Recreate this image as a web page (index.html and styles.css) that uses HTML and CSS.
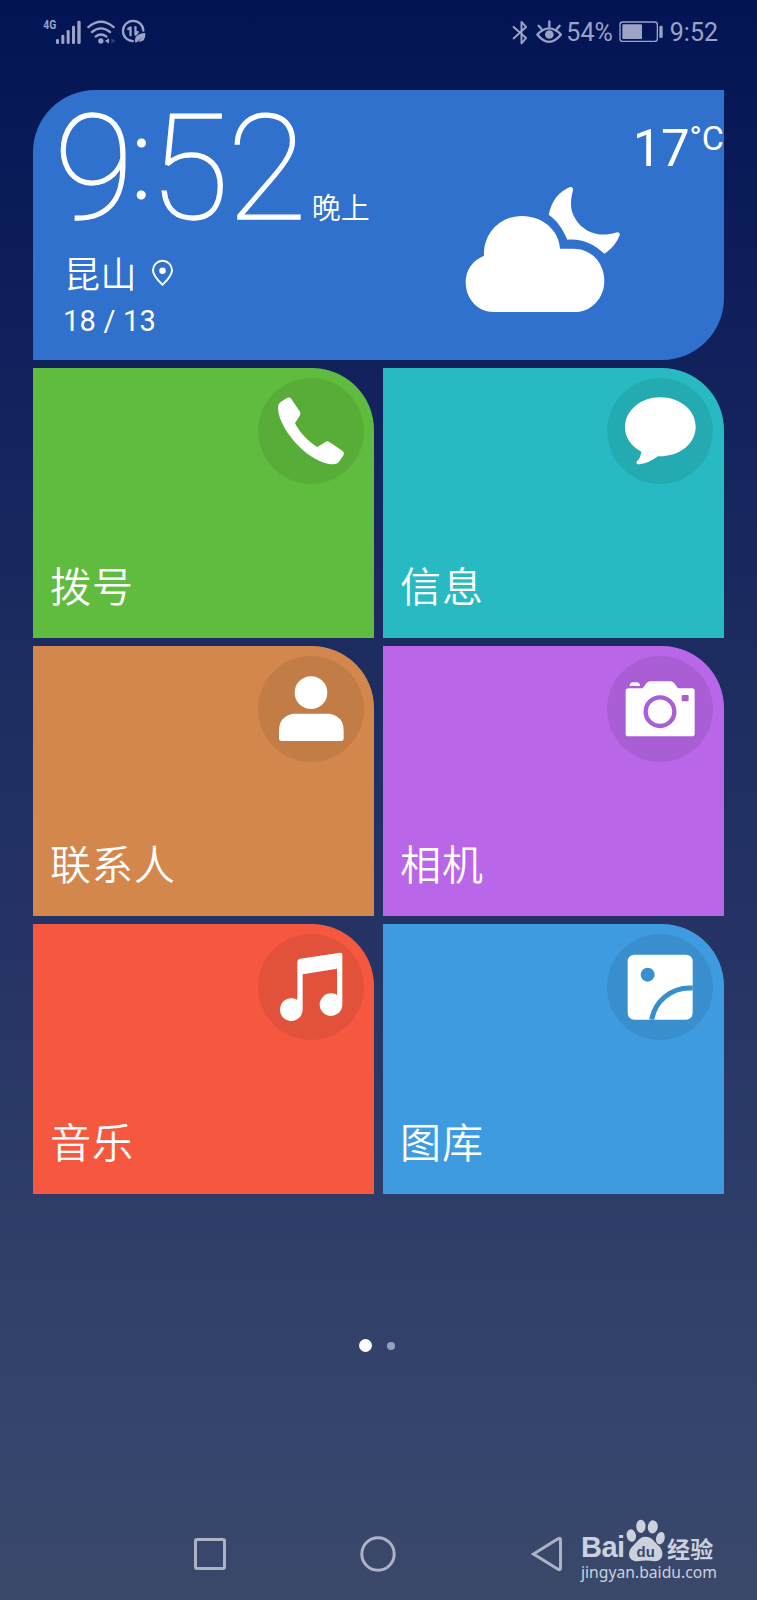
FILE: index.html
```html
<!DOCTYPE html>
<html lang="zh-CN">
<head>
	<meta charset="UTF-8">
	<meta name="viewport" content="width=device-width, initial-scale=1">
	<title>桌面</title>
	<link rel="stylesheet" href="styles.css">
</head>

<body>

<!-- 状态栏 -->
<div class="status">
	<svg class="signal" viewBox="0 -12 120 99" width="40" height="33">
		<text x="1" y="31" class="net" textLength="39" lengthAdjust="spacingAndGlyphs">4G</text>
		<rect x="39" y="60" width="9" height="15" rx="4"/>
		<rect x="55" y="47" width="9" height="28" rx="4"/>
		<rect x="71" y="33" width="9" height="42" rx="4"/>
		<rect x="87" y="20" width="9" height="55" rx="4"/>
		<rect x="103" y="5" width="10" height="70" rx="4"/>
	</svg>
	<svg class="wifi" viewBox="172 30 88 75" width="29" height="25">
		<path class="line" d="M176 54Q214 22 253 54M187 69Q214 47 242 69M198 83Q214 70 231 83"/>
		<circle cx="214" cy="96" r="8"/>
		<path d="M239 88v16l-13-8z"/>
		<path d="M246 88v16l13-8z" opacity=".3"/>
	</svg>
	<svg class="data" viewBox="274 35 76 75" width="25" height="25">
		<path class="line" d="M310 102A31 31 0 1 1 342 70"/>
		<path class="line" d="M296 65l7-5v24M318 59v23l7-8"/>
		<path d="M317 106Q312 79 348 77Q350 105 326 104L338 89L322 105z"/>
	</svg>

	<div class="status-right">
		<svg class="bt" viewBox="66 33 50 76" width="17" height="25">
			<path class="line bold" d="M70 54l38 34l-14 16V39l14 15l-38 35"/>
		</svg>
		<svg class="eye" viewBox="137 36 78 74" width="26" height="25">
			<path class="line" d="M141 79Q176 42 212 79Q176 123 141 79zM177 40v14M145 53l8 9M208 53l-8 9"/>
			<circle cx="177" cy="79" r="13"/>
		</svg>
		<span class="percent">54%</span>
		<svg class="battery" viewBox="385 40 135 66" width="45" height="22">
			<rect class="line thin" x="388" y="43" width="112" height="58" rx="8"/>
			<rect x="395" y="50" width="59" height="44" rx="2"/>
			<rect x="506" y="54" width="10" height="37" rx="4"/>
		</svg>
		<span class="time">9:52</span>
	</div>
</div>

<div class="tiles">
	<!-- 时间天气 -->
	<div class="weather">
		<div class="weather-left">
			<div class="clock">
				<span class="clock-num">9<span class="colon">:</span>52</span>
				<span class="clock-part">晚上</span>
			</div>
			<div class="city">
				<span>昆山</span>
				<svg viewBox="394 534 70 84" width="23" height="28">
					<path d="M429 612Q400 585 400 568A29 29 0 0 1 458 568Q458 585 429 612z" fill="none" stroke="#fff" stroke-width="6"/>
					<circle cx="429" cy="569" r="10" fill="#fff"/>
				</svg>
			</div>
			<div class="range">18 / 13</div>
		</div>
		<div class="weather-right">
			<div class="temp">17<span class="unit">°C</span></div>
			<svg class="cloud" viewBox="75 318 468 381" width="156" height="127">
				<path d="M162 696C112 696 77 656 77 606C77 570 99 540 132 527C130 460 180 408 246 408C307 408 357 450 360 506H400C455 506 493 550 493 602C493 655 453 696 405 696z"/>
				<path d="M326 404C336 360 357 335 390 321Q400 320 399 331C390 365 390 391 406 416C425 449 463 468 505 463Q519 461 531 457Q541 457 539 466C530 488 514 509 493 521C464 495 431 476 382 479C370 449 350 420 326 404z"/>
			</svg>
		</div>
	</div>

	<div class="tile green">
		<svg class="icon" viewBox="84 56 318 318">
			<circle class="disc" cx="243" cy="215" r="159"/>
			<path d="M152 128L171 116Q179 112 184 119L210 157Q213 163 209 169L195 192C210 220 234 247 262 263L286 248Q292 244 298 248L337 274Q344 279 341 286L329 305Q322 315 309 315C275 314 235 290 205 259C175 228 146 184 144 148Q143 135 152 128z"/>
		</svg>
		<span class="name">拨号</span>
	</div>

	<div class="tile teal">
		<svg class="icon" viewBox="52 56 318 318">
			<circle class="disc" cx="211" cy="215" r="159"/>
			<path d="M212 114C271 114 318 153 318 202C318 253 270 292 205 291Q177 312 148 315Q138 315 141 307Q152 297 155 277C124 261 106 235 106 204C106 154 153 114 212 114z"/>
		</svg>
		<span class="name">信息</span>
	</div>

	<div class="tile brown">
		<svg class="icon" viewBox="84 50 318 318">
			<circle class="disc" cx="243" cy="209" r="159"/>
			<circle cx="243" cy="160" r="49"/>
			<path d="M190 223H298Q341 231 341 274V297Q341 305 333 305H155Q147 305 147 297V274Q147 231 190 223z"/>
		</svg>
		<span class="name">联系人</span>
	</div>

	<div class="tile purple">
		<svg class="icon" viewBox="52 50 318 318">
			<circle class="disc" cx="211" cy="209" r="159"/>
			<path d="M120 140Q120 129 131 129H140Q151 129 151 140z"/>
			<path d="M116 147H159L171 131Q175 126 182 126H242Q249 126 253 131L265 147H307Q315 147 315 155V283Q315 291 307 291H116Q108 291 108 283V155Q108 147 116 147z"/>
			<circle class="hole-line" cx="211" cy="217" r="43" stroke-width="13"/>
			<rect class="hole" x="276" y="167" width="21" height="19" rx="3"/>
		</svg>
		<span class="name">相机</span>
	</div>

	<div class="tile red">
		<svg class="icon" viewBox="84 58 318 318">
			<circle class="disc" cx="243" cy="217" r="159"/>
			<path d="M210 132L330 114Q337 113 337 120V270A34 34 0 1 1 321 241V162L218 179V286A34 34 0 1 1 202 256V141Q202 134 210 132z"/>
		</svg>
		<span class="name">音乐</span>
	</div>

	<div class="tile blue">
		<svg class="icon" viewBox="52 58 318 318">
			<circle class="disc" cx="211" cy="217" r="159"/>
			<rect x="114" y="120" width="195" height="195" rx="20"/>
			<circle class="hole" cx="174" cy="180" r="21"/>
			<path class="hole-line" d="M186 315C196 260 243 220 300 220H309" stroke-width="15"/>
		</svg>
		<span class="name">图库</span>
	</div>
</div>

<!-- 页码 -->
<div class="pages">
	<span class="dot on"></span>
	<span class="dot"></span>
</div>

<!-- 导航栏 -->
<div class="nav">
	<svg class="recent" viewBox="0 0 32 32" width="32" height="32"><rect x="1.5" y="1.5" width="29" height="29" rx="1.5"/></svg>
	<svg class="home" viewBox="0 0 36 36" width="36" height="36"><circle cx="18" cy="18" r="16.2"/></svg>
	<svg class="back" viewBox="0 0 32 36" width="32" height="36"><path d="M2.5 18L27 2.8Q29.500 1.500 29.500 4V32Q29.500 34.500 27 33.200z"/></svg>

	<div class="mark">
		<div class="mark-top">
			<span class="bai">Bai</span>
			<svg viewBox="381 55 118 130" width="39" height="43">
				<ellipse cx="397" cy="105" rx="14" ry="19" transform="rotate(-12 397 105)"/>
				<ellipse cx="426" cy="77" rx="14" ry="20"/>
				<ellipse cx="462" cy="79" rx="15" ry="20" transform="rotate(8 462 79)"/>
				<ellipse cx="485" cy="113" rx="13" ry="19" transform="rotate(14 485 113)"/>
				<path d="M440 109C458 109 465 122 476 133C501 152 493 183 468 183Q441 178 416 183C386 183 382 153 404 134C416 124 422 109 440 109z"/>
				<text x="413" y="170" class="du" textLength="55" lengthAdjust="spacingAndGlyphs">du</text>
			</svg>
			<span class="jy">经验</span>
		</div>
		<div class="mark-url">jingyan.baidu.com</div>
	</div>
</div>

</body>
</html>
```
FILE: styles.css
```css
html, body {
	height: 100%;
	margin: 0;
	overflow: hidden;
}

body {
	display: flex;
	flex-direction: column;
	background: linear-gradient(#031455 0%, #091a58 10%, #14245e 28%, #1d2d60 42%, #253464 60%, #30406a 80%, #35456d 91%, #3a4869 100%);
	color: #fff;
	font-family: Roboto, "Noto Sans CJK SC", sans-serif;
}

svg {
	display: block;
	flex: none;
}

/* 状态栏 */
.status {
	display: flex;
	align-items: center;
	box-sizing: border-box;
	height: 90px;
	padding: 0 39px 26px 43px;
	color: #9ba3c6;
	fill: #9ba3c6;
}

.signal,
.wifi,
.data {
	margin-top: -2px;
}

.status .line {
	fill: none;
	stroke: #9ba3c6;
	stroke-width: 7;
	stroke-linecap: round;
	stroke-linejoin: round;
}

.status .thin {
	stroke-width: 4;
}

.status .bold {
	stroke-width: 6;
}

.net {
	font: bold 38px Roboto, sans-serif;
}

.wifi {
	margin-left: 4px;
}

.data {
	margin-left: 5px;
}

.status-right {
	display: flex;
	align-items: center;
	margin-left: auto;
	font-size: 25px;
	line-height: 30px;
}

.eye {
	margin-left: 7px;
}

.percent {
	margin: 2px 0 0 4px;
}

.battery {
	margin-left: 6px;
}

.time {
	margin: 2px 0 0 6px;
}

/* 磁贴 */
.tiles {
	display: grid;
	grid-template-columns: 341px 341px;
	grid-auto-rows: 270px;
	gap: 8px 9px;
	padding: 0 33px;
}

.weather {
	grid-column: 1 / 3;
	display: flex;
	justify-content: space-between;
	background: #3071ce;
	border-radius: 62px 0 62px 0;
}

.weather-left {
	padding: 6px 0 0 21px;
}

.clock {
	display: flex;
	align-items: baseline;
	height: 158px;
}

.clock-num {
	font-size: 146px;
	font-weight: 100;
	line-height: 148px;
	letter-spacing: -2.200px;
	-webkit-text-stroke: 1.300px #fff;
}

.colon {
	font-size: 111px;
	line-height: 1px;
	vertical-align: 21px;
	-webkit-text-stroke: 3px #fff;
}

.clock-part {
	margin-left: 7px;
	font-size: 29px;
	font-weight: 350;
	line-height: 40px;
}

.city {
	display: flex;
	align-items: center;
	gap: 14px;
	margin-left: 10px;
	font-size: 36px;
	font-weight: 350;
	line-height: 44px;
	letter-spacing: 0.500px;
}

.city svg {
	margin-bottom: 6px;
}

.range {
	margin: 6px 0 0 9px;
	font-size: 29px;
	line-height: 34px;
	letter-spacing: 0.2px;
}

.weather-right {
	width: 259px;
	padding-top: 31px;
}

.temp {
	display: flex;
	justify-content: flex-end;
	font-size: 51px;
	line-height: 56px;
	letter-spacing: -0.500px;
}

.unit {
	font-size: 34px;
	line-height: 34px;
	letter-spacing: 0;
}

.cloud {
	margin-top: 9px;
	fill: #fff;
}

.tile {
	display: flex;
	flex-direction: column;
	justify-content: space-between;
	box-sizing: border-box;
	padding: 10.400px 10px 20px 17px;
	border-radius: 0 62px 0 0;
}

.green { background: #60bc3e; }
.teal { background: #28bac2; }
.brown { background: #d3874c; }
.purple { background: #b966e8; }
.red { background: #f6583f; }
.blue { background: #3e9be0; }

.teal,
.purple,
.blue {
	padding-right: 10.600px;
}

.icon {
	align-self: flex-end;
	width: 106px;
	height: 106px;
	fill: #fff;
}

.disc {
	fill: rgba(0, 0, 0, 0.08);
}

.hole {
	fill: #388fce;
}

.hole-line {
	fill: none;
	stroke: #388fce;
}

.purple .hole {
	fill: #aa5ed5;
}

.purple .hole-line {
	stroke: #aa5ed5;
}

.name {
	font-size: 41px;
	font-weight: 350;
	line-height: 60px;
	letter-spacing: 1px;
}

/* 页码 */
.pages {
	display: flex;
	align-items: center;
	gap: 15px;
	height: 13px;
	margin: 145px 0 0 359px;
}

.dot {
	width: 8px;
	height: 8px;
	border-radius: 50%;
	background: #98a0b8;
}

.dot.on {
	width: 13px;
	height: 13px;
	background: #fff;
}

/* 导航栏 */
.nav {
	display: flex;
	height: 70px;
	margin-top: auto;
	padding: 0 0 16px 194px;
	fill: none;
	stroke: #aeb3c4;
	stroke-width: 3;
}

.recent { margin-top: 24px; }
.home { margin: 22px 0 0 134px; }
.back { margin: 22px 0 0 135px; }

.mark {
	margin: 5px 0 0 18px;
	color: #ccd1de;
	fill: #ccd1de;
	stroke: none;
}

.mark-top {
	display: flex;
	align-items: flex-end;
	height: 43px;
}

.bai {
	width: 45px;
	font: bold 29px/29px "Liberation Sans", sans-serif;
	letter-spacing: -0.500px;
}

.du {
	fill: #394869;
	font: bold 45px "Liberation Sans", sans-serif;
}

.jy {
	margin-left: 2px;
	font-size: 23px;
	font-weight: 700;
	line-height: 22px;
	letter-spacing: 0.300px;
}

.mark-url {
	font: 15.700px/20px "Noto Sans", sans-serif;
}
```
